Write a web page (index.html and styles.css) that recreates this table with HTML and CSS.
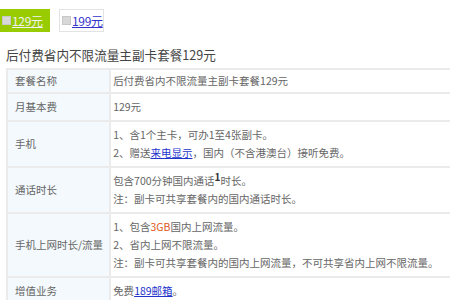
FILE: index.html
```html
<!DOCTYPE html>
<html>
<head>
<meta charset="utf-8">
<link rel="stylesheet" href="styles.css">
</head>
<body>
<div class="tabs">
  <div class="tab tab-on"><span class="box"></span><a href="#">129元</a></div>
  <div class="tab tab-off"><span class="box"></span><a href="#">199元</a></div>
</div>
<h1 class="title">后付费省内不限流量主副卡套餐129元</h1>
<table class="plan">
  <tr class="r-tight"><th>套餐名称</th><td>后付费省内不限流量主副卡套餐129元</td></tr>
  <tr class="r-mid"><th>月基本费</th><td>129元</td></tr>
  <tr><th>手机</th><td>1、含1个主卡，可办1至4张副卡。<br>2、赠送<a href="#">来电显示</a>，国内（不含港澳台）接听免费。</td></tr>
  <tr><th>通话时长</th><td>包含700分钟国内通话<sup>1</sup>时长。<br>注：副卡可共享套餐内的国内通话时长。</td></tr>
  <tr><th>手机上网时长/流量</th><td>1、包含<span class="hl">3GB</span>国内上网流量。<br>2、省内上网不限流量。<br>注：副卡可共享套餐内的国内上网流量，不可共享省内上网不限流量。</td></tr>
  <tr><th>增值业务</th><td>免费<a href="#">189邮箱</a>。</td></tr>
</table>
</body>
</html>
```
FILE: styles.css
```css
html, body { margin: 0; padding: 0; background: #fff; }
body { font-family: "Noto Sans CJK SC", "Liberation Sans", sans-serif; color: #666; overflow: hidden; width: 450px; height: 300px; }
.tabs { display: flex; gap: 9px; padding-top: 9px; }
.tab { height: 23px; display: flex; align-items: center; font-size: 12px; box-sizing: border-box; }
.tab-on { background: #99cc00; width: 50px; padding-left: 2px; }
.tab-on a { color: #f2f2f2; }
.tab-off { background: #fff; border: 1px solid #e3e3e3; width: 45px; padding-left: 2px; }
.tab-off a { color: #3333cc; }
.box { width: 7px; height: 7px; background: #d8d8d8; border: 1px solid #c8c8c8; margin-right: 1px; }
.tab a { text-decoration: underline; letter-spacing: -0.3px; }
.title { font-size: 12.6px; font-weight: normal; color: #444; margin: 14px 0 0 6px; line-height: 18px; }
.plan { border-collapse: collapse; margin: 4px 0 0 6px; width: 446px; font-size: 10.5px; }
.plan th, .plan td { border: 2px solid #ebebeb; text-align: left; font-weight: normal; line-height: 18px; padding: 4px 6px; vertical-align: middle; }
.plan th { background: #f3f9fc; width: 88px; padding-left: 7px; color: #666; white-space: nowrap; }
.plan td { padding-left: 2px; }
.plan .r-tight th, .plan .r-tight td { padding-top: 2px; padding-bottom: 2px; }
.plan .r-mid th, .plan .r-mid td { padding-top: 4px; padding-bottom: 4px; }
.plan a { color: #2233cc; text-decoration: underline; }
.plan sup { font-weight: bold; font-size: 10px; line-height: 0; color: #333; }
.hl { color: #e0561a; }
```
